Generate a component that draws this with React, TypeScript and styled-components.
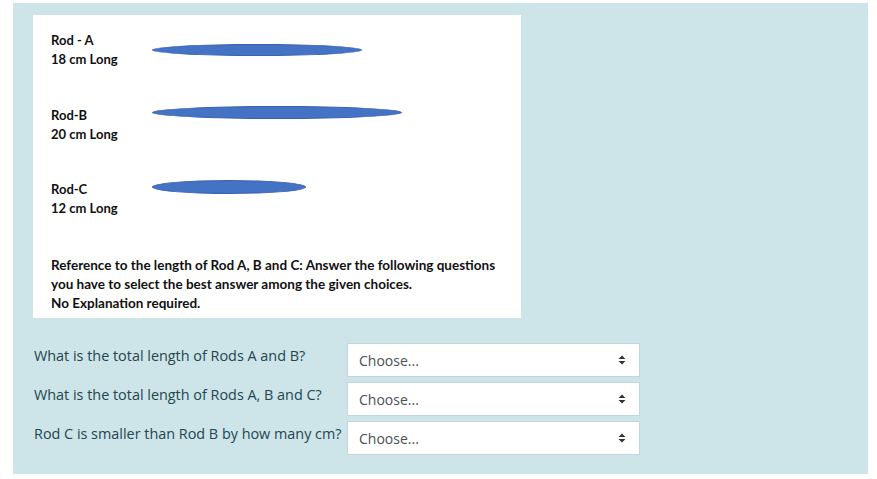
import React from "react";
import styled, { createGlobalStyle } from "styled-components";

const Global = createGlobalStyle`
  html, body { margin: 0; padding: 0; background: #ffffff; }
  body { font-family: "Open Sans", "Liberation Sans", sans-serif; }
`;

const Panel = styled.div`
  margin: 3px 0 0 13px;
  width: 855px;
  height: 471px;
  box-sizing: border-box;
  background: #cde4e9;
  padding: 12px 20px 0 20px;
`;

const Card = styled.div`
  width: 488px;
  height: 303px;
  box-sizing: border-box;
  background: #ffffff;
  padding: 16px 0 0 18px;
  font-family: Lato, "Liberation Sans", sans-serif;
  font-weight: 700;
  font-size: 13px;
  line-height: 19px;
  color: #111111;
  display: flex;
  flex-direction: column;
`;

const RodRow = styled.div<{ $gap: number }>`
  display: flex;
  align-items: flex-start;
  margin-bottom: ${(p) => p.$gap}px;
`;

const RodLabel = styled.div`
  width: 101px;
  flex: none;
  white-space: nowrap;
`;

const Rod = styled.div<{ $w: number; $h: number; $top: number }>`
  width: ${(p) => p.$w}px;
  height: ${(p) => p.$h}px;
  margin-top: ${(p) => p.$top}px;
  box-sizing: border-box;
  background: #4472c4;
  border: 1px solid #3a63ad;
  border-radius: 50%;
`;

const Note = styled.p`
  margin: 0;
  white-space: nowrap;
  font-size: 13.5px;
`;

const Questions = styled.div`
  margin-top: 25px;
  display: flex;
  flex-direction: column;
  gap: 5px;
`;

const QRow = styled.div`
  display: flex;
  align-items: flex-start;
  padding-left: 1px;
`;

const QLabel = styled.div`
  width: 313px;
  flex: none;
  padding-top: 2px;
  font-size: 14.4px;
  line-height: 22px;
  color: #23464f;
  white-space: nowrap;
`;

const Select = styled.div`
  width: 293px;
  height: 34px;
  box-sizing: border-box;
  background: #ffffff;
  border: 1px solid #c4d6da;
  display: flex;
  align-items: center;
  justify-content: space-between;
  padding: 0 13px 0 11px;
  font-size: 14px;
  color: #495057;
`;

const Arrows = () => (
  <svg width="8" height="10" viewBox="0 0 8 10">
    <path d="M4 0.5 L7.5 4 H0.5 Z M4 9.5 L7.5 6 H0.5 Z" fill="#333333" />
  </svg>
);

const rods = [
  { name: "Rod - A", len: "18 cm Long", w: 210, h: 12, top: 13, gap: 37 },
  { name: "Rod-B", len: "20 cm Long", w: 250, h: 13, top: 0, gap: 36 },
  { name: "Rod-C", len: "12 cm Long", w: 154, h: 14, top: 0, gap: 38 },
];

const questions = [
  "What is the total length of Rods A and B?",
  "What is the total length of Rods A, B and C?",
  "Rod C is smaller than Rod B by how many cm?",
];

export default function App() {
  return (
    <>
      <Global />
      <Panel>
        <Card>
          {rods.map((r) => (
            <RodRow key={r.name} $gap={r.gap}>
              <RodLabel>
                {r.name}
                <br />
                {r.len}
              </RodLabel>
              <Rod $w={r.w} $h={r.h} $top={r.top} />
            </RodRow>
          ))}
          <Note>
            Reference to the length of Rod A, B and C: Answer the following questions
            <br />
            you have to select the best answer among the given choices.
            <br />
            No Explanation required.
          </Note>
        </Card>
        <Questions>
          {questions.map((q) => (
            <QRow key={q}>
              <QLabel>{q}</QLabel>
              <Select>
                <span>Choose...</span>
                <Arrows />
              </Select>
            </QRow>
          ))}
        </Questions>
      </Panel>
    </>
  );
}
